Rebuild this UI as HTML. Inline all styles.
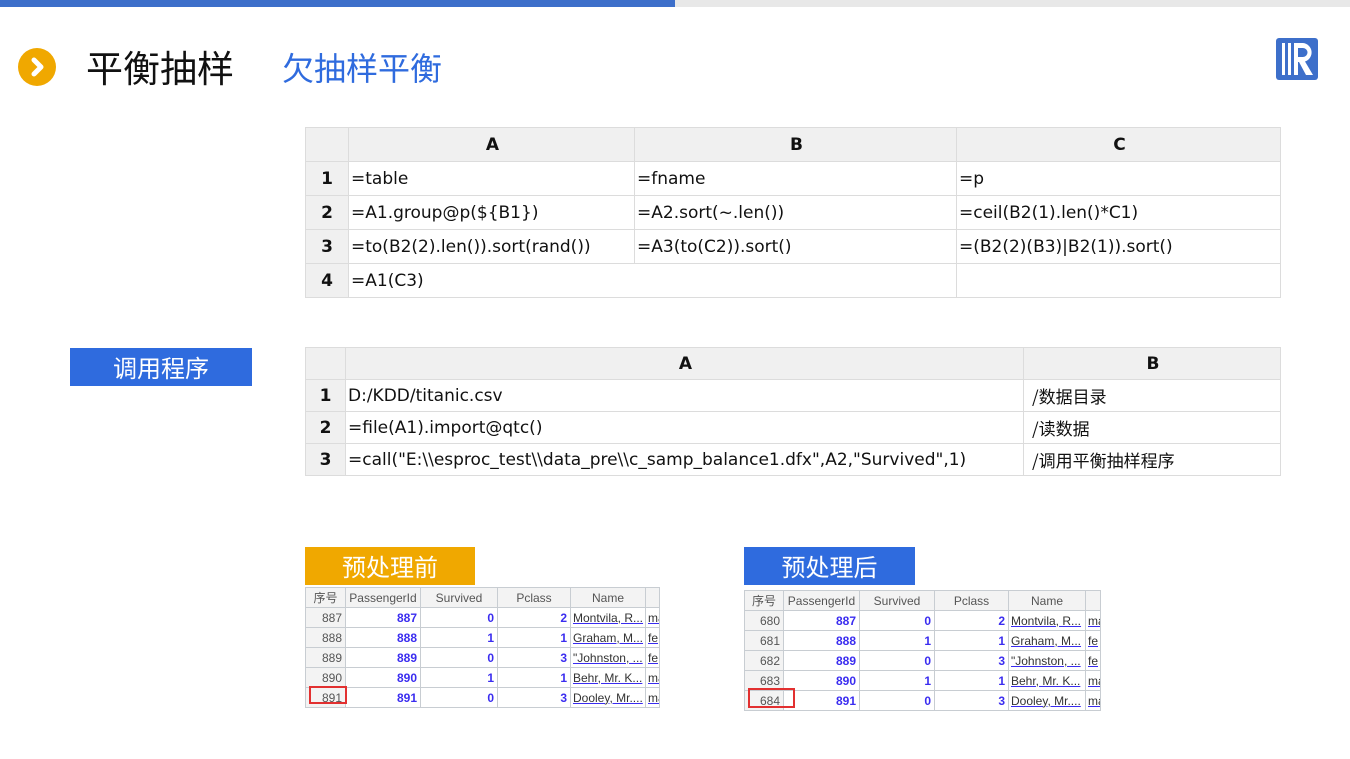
<!DOCTYPE html>
<html><head><meta charset="utf-8"><style>
*{margin:0;padding:0;box-sizing:border-box}
body{width:1350px;height:759px;background:#fff;position:relative;overflow:hidden;font-family:"Liberation Sans","Noto Sans CJK SC",sans-serif}
.abs{position:absolute}
table{border-collapse:collapse;position:absolute;table-layout:fixed}
.t td{border:1px solid #dcdcdc;color:#111;padding:0 0 0 2px;white-space:nowrap;overflow:hidden;font-family:"DejaVu Sans","Noto Sans CJK SC",sans-serif;font-size:17px;line-height:20px;vertical-align:middle}
.t td.c{font-family:"Noto Sans CJK SC",sans-serif;padding-left:8px}
.t tr:first-child td{background:#f0f0f0;text-align:center;font-weight:bold}
.t td.h{background:#f0f0f0;text-align:center;font-weight:bold;padding:0}
.s td{border:1px solid #c8cdd2;font-size:12px;height:20px;padding:0 3px;text-align:right;color:#3a2cf0;white-space:nowrap;overflow:hidden;background:#fff;font-weight:bold}
.s tr:first-child td{background:#f3f3f3;color:#555;text-align:center;font-weight:normal}
.s td.n{color:#555;background:#f3f3f3;font-weight:normal}
.s td.nm{text-align:left;color:#333;padding:0 2px;text-decoration:underline;text-decoration-color:#3a2cf0;font-weight:normal}
.lab{position:absolute;color:#fff;font-size:24px;text-align:center;font-family:"Noto Sans CJK SC",sans-serif}
.red{position:absolute;border:2px solid #e23030}
</style></head><body>
<div class="abs" style="left:0;top:0;width:675px;height:7px;background:#3d6fca"></div>
<div class="abs" style="left:675px;top:0;width:675px;height:7px;background:#e8e8e8"></div>
<div class="abs" style="left:18px;top:48px;width:38px;height:38px;border-radius:50%;background:#f0a800"></div>
<svg class="abs" style="left:18px;top:48px" width="38" height="38"><path d="M16 12 L23 19 L16 26" stroke="#fff" stroke-width="5" fill="none" stroke-linecap="round" stroke-linejoin="round"/></svg>
<div class="abs" style="left:86px;top:40px;font-size:37px;color:#111;font-family:'Noto Sans CJK SC',sans-serif;line-height:52px">平衡抽样</div>
<div class="abs" style="left:282px;top:44px;font-size:32px;color:#2f6bde;font-family:'Noto Sans CJK SC',sans-serif;line-height:46px">欠抽样平衡</div>
<svg class="abs" style="left:1276px;top:38px" width="42" height="42"><rect x="0" y="0" width="42" height="42" rx="3" fill="#3d6fca"/><rect x="6" y="5" width="3" height="32" fill="#fff"/><rect x="12" y="5" width="3" height="32" fill="#fff"/><path d="M18 5 H27 A9.5 9.5 0 0 1 29 23.5 L37 37 H30 L23 24 H22 V37 H18 Z M22 10 V19 H27 A4.5 4.5 0 0 0 27 10 Z" fill="#fff" fill-rule="evenodd"/></svg>

<table class="t" style="left:305px;top:127px;width:975px">
<colgroup><col style="width:43px"><col style="width:286px"><col style="width:322px"><col style="width:324px"></colgroup>
<tr style="height:34px"><td></td><td>A</td><td>B</td><td>C</td></tr>
<tr style="height:34px"><td class="h">1</td><td>=table</td><td>=fname</td><td>=p</td></tr>
<tr style="height:34px"><td class="h">2</td><td>=A1.group@p(${B1})</td><td>=A2.sort(~.len())</td><td>=ceil(B2(1).len()*C1)</td></tr>
<tr style="height:34px"><td class="h">3</td><td>=to(B2(2).len()).sort(rand())</td><td>=A3(to(C2)).sort()</td><td>=(B2(2)(B3)|B2(1)).sort()</td></tr>
<tr style="height:34px"><td class="h">4</td><td colspan="2">=A1(C3)</td><td></td></tr>
</table>

<div class="lab" style="left:70px;top:348px;width:182px;height:38px;line-height:38px;background:#2f6bde">调用程序</div>
<table class="t" style="left:305px;top:347px;width:975px">
<colgroup><col style="width:40px"><col style="width:678px"><col style="width:257px"></colgroup>
<tr style="height:32px"><td></td><td>A</td><td>B</td></tr>
<tr style="height:32px"><td class="h">1</td><td>D:/KDD/titanic.csv</td><td class="c">/数据目录</td></tr>
<tr style="height:32px"><td class="h">2</td><td>=file(A1).import@qtc()</td><td class="c">/读数据</td></tr>
<tr style="height:32px"><td class="h">3</td><td>=call("E:\\esproc_test\\data_pre\\c_samp_balance1.dfx",A2,"Survived",1)</td><td class="c">/调用平衡抽样程序</td></tr>
</table>

<div class="lab" style="left:305px;top:547px;width:170px;height:38px;line-height:38px;background:#f0a800">预处理前</div>
<table class="s" style="left:305px;top:587px;width:354px">
<colgroup><col style="width:40px"><col style="width:75px"><col style="width:77px"><col style="width:73px"><col style="width:75px"><col style="width:14px"></colgroup>
<tr><td>序号</td><td>PassengerId</td><td>Survived</td><td>Pclass</td><td>Name</td><td></td></tr>
<tr><td class="n">887</td><td>887</td><td>0</td><td>2</td><td class="nm">Montvila, R...</td><td class="nm">ma</td></tr>
<tr><td class="n">888</td><td>888</td><td>1</td><td>1</td><td class="nm">Graham, M...</td><td class="nm">fe</td></tr>
<tr><td class="n">889</td><td>889</td><td>0</td><td>3</td><td class="nm">"Johnston, ...</td><td class="nm">fe</td></tr>
<tr><td class="n">890</td><td>890</td><td>1</td><td>1</td><td class="nm">Behr, Mr. K...</td><td class="nm">ma</td></tr>
<tr><td class="n">891</td><td>891</td><td>0</td><td>3</td><td class="nm">Dooley, Mr....</td><td class="nm">ma</td></tr>
</table>
<div class="red" style="left:309px;top:686px;width:38px;height:18px"></div>

<div class="lab" style="left:744px;top:547px;width:171px;height:38px;line-height:38px;background:#2f6bde">预处理后</div>
<table class="s" style="left:744px;top:590px;width:356px">
<colgroup><col style="width:39px"><col style="width:76px"><col style="width:75px"><col style="width:74px"><col style="width:77px"><col style="width:15px"></colgroup>
<tr><td>序号</td><td>PassengerId</td><td>Survived</td><td>Pclass</td><td>Name</td><td></td></tr>
<tr><td class="n">680</td><td>887</td><td>0</td><td>2</td><td class="nm">Montvila, R...</td><td class="nm">ma</td></tr>
<tr><td class="n">681</td><td>888</td><td>1</td><td>1</td><td class="nm">Graham, M...</td><td class="nm">fe</td></tr>
<tr><td class="n">682</td><td>889</td><td>0</td><td>3</td><td class="nm">"Johnston, ...</td><td class="nm">fe</td></tr>
<tr><td class="n">683</td><td>890</td><td>1</td><td>1</td><td class="nm">Behr, Mr. K...</td><td class="nm">ma</td></tr>
<tr><td class="n">684</td><td>891</td><td>0</td><td>3</td><td class="nm">Dooley, Mr....</td><td class="nm">ma</td></tr>
</table>
<div class="red" style="left:748px;top:688px;width:47px;height:20px"></div>
</body></html>
